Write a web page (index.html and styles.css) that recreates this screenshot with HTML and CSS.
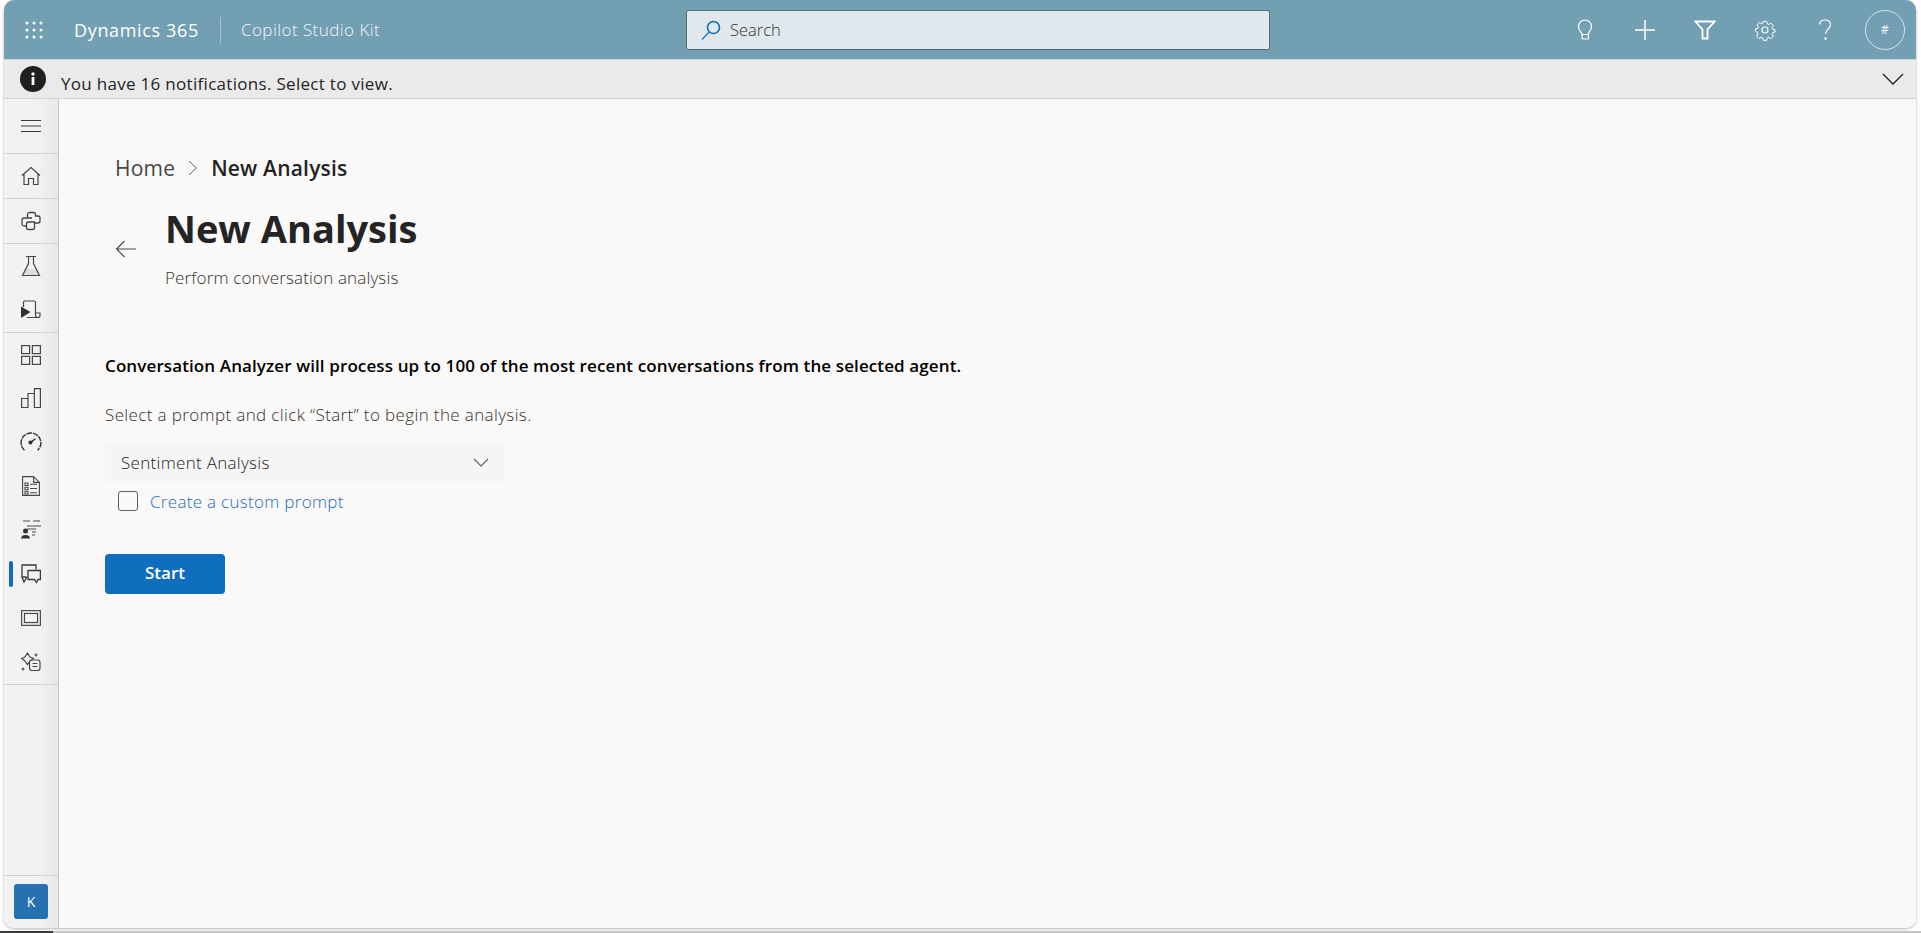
FILE: index.html
```html
<!DOCTYPE html>
<html lang="en">

<head>
    <meta charset="UTF-8">
    <meta name="viewport" content="width=device-width, initial-scale=1.0">
    <title>New Analysis</title>
    <link rel="stylesheet" href="styles.css">
</head>

<body>
    <div class="window">
        <header class="topbar">
            <div class="topbar-left">
                <svg class="waffle" width="20" height="20" viewBox="0 0 20 20" fill="#fff">
                    <circle cx="3" cy="3" r="1.5"/><circle cx="10" cy="3" r="1.5"/><circle cx="17" cy="3" r="1.5"/>
                    <circle cx="3" cy="10" r="1.5"/><circle cx="10" cy="10" r="1.5"/><circle cx="17" cy="10" r="1.5"/>
                    <circle cx="3" cy="17" r="1.5"/><circle cx="10" cy="17" r="1.5"/><circle cx="17" cy="17" r="1.5"/>
                </svg>
                <span class="brand">Dynamics 365</span>
                <span class="app-name">Copilot Studio Kit</span>
            </div>
            <div class="search">
                <svg width="24" height="24" viewBox="0 0 24 24" fill="none" stroke="#0f6cbd">
                    <circle cx="14.5" cy="9.5" r="6" stroke-width="1.6"/>
                    <path d="M10.2 14 3 21.5" stroke-width="1.1"/>
                </svg>
                <span>Search</span>
            </div>
            <div class="topbar-right">
                <button class="top-icon">
                    <svg width="20" height="22" viewBox="0 0 20 22" fill="none" stroke="#fff" stroke-width="1.2">
                        <path d="M7 15.5C6.5 12.5 3.5 11.5 3.5 7.5a6.5 6.5 0 0 1 13 0c0 4-3 5-3.500 8Z"/>
                        <path d="M7 15.500h6.500v3.500a1 1 0 0 1-1 1h-4.500a1 1 0 0 1-1-1Z"/>
                    </svg>
                </button>
                <button class="top-icon">
                    <svg width="22" height="22" viewBox="0 0 22 22" stroke="#fff" stroke-width="1.5"><path d="M11 1v20M1 11h20"/></svg>
                </button>
                <button class="top-icon">
                    <svg width="22" height="20" viewBox="0 0 22 20" fill="none" stroke="#fff" stroke-width="1.800"><path d="M1.500 1.500h19l-7 8v9h-5v-9Z"/></svg>
                </button>
                <button class="top-icon">
                    <svg width="22" height="22" viewBox="0 0 22 22" fill="none" stroke="#fff" stroke-width="1.100">
                        <circle cx="11" cy="11" r="3"/>
                        <path d="M9 1.500h4l.6 2.700 1.600.7 2.400-1.500 2.700 2.800-1.500 2.400.7 1.600 2.700.6v2.400l-2.700.6-.7 1.600 1.500 2.400-2.700 2.800-2.400-1.500-1.600.7-.6 2.700H9l-.6-2.700-1.600-.7-2.400 1.500-2.700-2.800 1.500-2.400-.7-1.600L.3 12.200V9.800l2.700-.6.7-1.600-1.500-2.400 2.700-2.800 2.400 1.500 1.600-.7Z" transform="translate(1.100 1.100) scale(.9)"/>
                    </svg>
                </button>
                <button class="top-icon">
                    <svg width="14" height="22" viewBox="0 0 14 22" fill="none" stroke="#fff" stroke-width="1.200">
                        <path d="M1.500 5.500C1.500 3 3.700 1 7 1s5.500 2 5.500 4.800c0 4-5 4.500-5 9.200"/>
                        <circle cx="7.500" cy="19.500" r=".6"/>
                    </svg>
                </button>
                <div class="avatar">#</div>
            </div>
        </header>

        <div class="notice">
            <svg width="26" height="26" viewBox="0 0 26 26">
                <circle cx="13" cy="13" r="13" fill="#201f1e"/>
                <circle cx="13" cy="8" r="1.700" fill="#fff"/>
                <rect x="11.600" y="11" width="2.800" height="8" fill="#fff"/>
            </svg>
            <span class="notice-text">You have 16 notifications. Select to view.</span>
            <svg class="notice-chevron" width="22" height="12" viewBox="0 0 22 12" fill="none" stroke="#201f1e" stroke-width="1.300"><path d="M1 1l10 10L21 1"/></svg>
        </div>

        <div class="body">
            <nav class="sidebar">
                <div class="nav-group nav-menu">
                    <svg class="nav-icon" width="22" height="14" viewBox="0 0 22 14" stroke="#3b3a39" stroke-width="1"><path d="M1 1.500h20M1 7h20M1 12.500h20"/></svg>
                </div>
                <div class="nav-group">
                    <div class="nav-item">
                        <svg width="20" height="20" viewBox="0 0 20 20" fill="none" stroke="#484644" stroke-width="1.200"><path d="M1 9.500 10 1.500l9 8M3 8v10.500h4.500v-6h5v6H17V8"/></svg>
                    </div>
                </div>
                <div class="nav-group">
                    <div class="nav-item">
                        <svg width="20" height="20" viewBox="0 0 20 20" fill="none" stroke="#484644" stroke-width="1.300"><path d="M6.500 7V3.500a2 2 0 0 1 2-2h4a2 2 0 0 1 2 2V5H17a2 2 0 0 1 2 2v3a2 2 0 0 1-2 2h-3.500v4.500a2 2 0 0 1-2 2h-4a2 2 0 0 1-2-2V15H3a2 2 0 0 1-2-2V9a2 2 0 0 1 2-2h8M5.500 15v-2a2 2 0 0 1 2-2h6.500"/></svg>
                    </div>
                </div>
                <div class="nav-group">
                    <div class="nav-item">
                        <svg width="20" height="22" viewBox="0 0 20 22" fill="none" stroke="#484644" stroke-width="1.200"><path d="M4.500 14h11l2.500 6.500H2Z" fill="#dcdcdc" stroke="none"/><path d="M5 1.500h10M7.500 1.500v7L1.500 20.500h17l-6-12v-7"/></svg>
                    </div>
                    <div class="nav-item">
                        <svg width="20" height="20" viewBox="0 0 20 20" fill="none" stroke="#484644" stroke-width="1.200"><path d="M2.500 7V2a1.500 1.500 0 0 1 1.500-1h9a1.500 1.500 0 0 1 1.500 1.500V15a2.500 2.500 0 0 0 2.500 2.500H6"/><path d="M14.500 13H19v2.500a2 2 0 0 1-2 2"/><path d="M0 6.500 9.500 12 0 18Z" fill="#323130" stroke="none"/></svg>
                    </div>
                </div>
                <div class="nav-group">
                    <div class="nav-item">
                        <svg width="20" height="20" viewBox="0 0 20 20" fill="none" stroke="#484644" stroke-width="1.200"><rect x=".6" y=".6" width="8" height="8"/><rect x="11.400" y=".6" width="8" height="8"/><rect x=".6" y="11.400" width="8" height="8"/><rect x="11.400" y="11.400" width="8" height="8"/></svg>
                    </div>
                    <div class="nav-item">
                        <svg width="20" height="20" viewBox="0 0 20 20" fill="none" stroke="#484644" stroke-width="1.200"><path d="M.6 10.500h6.400v9H.6ZM7 19.500V5.500h6.400v14M13.400 19.500V.6h6v18.900Z"/></svg>
                    </div>
                    <div class="nav-item">
                        <svg width="22" height="22" viewBox="0 0 20 20" fill="none" stroke="#323130" stroke-width="1.300"><path d="M4 17.500A9 9 0 1 1 16 17.500" stroke-dasharray="5 .8"/><path d="M9 11l5-4"/><circle cx="9.500" cy="10.500" r="1.200" fill="#323130"/></svg>
                    </div>
                    <div class="nav-item">
                        <svg width="18" height="20" viewBox="0 0 18 20" fill="none" stroke="#484644" stroke-width="1.100"><path d="M.6 .6h11l5.800 5.800v13H.6ZM11.600 .6v5.800h5.800"/><path d="M3 7h3v2.500H3ZM3 11.300h3v2.500H3ZM3 15.500h3V18H3ZM8 8.300h7M8 12.500h7M8 16.700h7"/></svg>
                    </div>
                    <div class="nav-item">
                        <svg width="20" height="20" viewBox="0 0 20 20" fill="none" stroke="#484644" stroke-width="1.100"><path d="M2 1h7M12 1h7M6 6h14M6 9h9M11 12h4M11 15h3"/><circle cx="4.500" cy="11" r="2.500" fill="#323130" stroke="none"/><path d="M0 18.500c0-2.500 2-3.500 4.500-3.500S9 16 9 18.500Z" fill="#323130" stroke="none"/></svg>
                    </div>
                    <div class="nav-item nav-item-active">
                        <svg width="20" height="20" viewBox="0 0 20 20" fill="none" stroke="#3b3a39" stroke-width="1.300"><path d="M5.500 13H1V1h14v4.500"/><path d="M1 13l2 5 3-5"/><path d="M7 6.500h12.400v9H17l-1.500 3-2-3H7Z" fill="#f1f1f1"/></svg>
                    </div>
                    <div class="nav-item">
                        <svg width="20" height="16" viewBox="0 0 20 16" fill="none" stroke="#484644" stroke-width="1.100"><rect x=".6" y=".6" width="18.800" height="14.800" fill="#e6e6e6"/><rect x="3.500" y="3.500" width="13" height="9" fill="#f3f3f3"/></svg>
                    </div>
                    <div class="nav-item">
                        <svg width="20" height="20" viewBox="0 0 20 20" fill="none" stroke="#484644" stroke-width="1.200"><path d="M6.500 1 9 5l3.500 1.500L9 9l-2.500 3.500L4 9 .6 6.500 4 5Z"/><rect x="8.500" y="8" width="10.500" height="10.500" rx="2.500" fill="#f1f1f1"/><path d="M11.500 11.500h5M11.500 14.500h5M15 1.500v3M13.500 3h3M2 15.500v3M.5 17h3"/></svg>
                    </div>
                </div>
                <div class="sidebar-foot">
                    <div class="env-badge">K</div>
                </div>
            </nav>

            <main class="main">
                <div class="breadcrumb">
                    <span class="crumb">Home</span>
                    <svg width="10" height="16" viewBox="0 0 10 16" fill="none" stroke="#605e5c"><path d="M1 1l7.500 7L1 15"/></svg>
                    <span class="crumb-current">New Analysis</span>
                </div>
                <div class="page-head">
                    <svg class="back" width="22" height="18" viewBox="0 0 22 18" fill="none" stroke="#484644" stroke-width="1.100"><path d="M21 9H1.500M9.500 1 1.500 9l8 8"/></svg>
                    <div>
                        <h1>New Analysis</h1>
                        <p class="subtitle">Perform conversation analysis</p>
                    </div>
                </div>
                <section class="form">
                    <p class="lead">Conversation Analyzer will process up to 100 of the most recent conversations from the selected agent.</p>
                    <p class="hint">Select a prompt and click “Start” to begin the analysis.</p>
                    <div class="select">
                        <span>Sentiment Analysis</span>
                        <svg width="16" height="9" viewBox="0 0 16 9" fill="none" stroke="#605e5c" stroke-width="1.100"><path d="M1 1l7 7 7-7"/></svg>
                    </div>
                    <div class="check-row">
                        <span class="checkbox"></span>
                        <a href="#" class="link">Create a custom prompt</a>
                    </div>
                    <button class="start">Start</button>
                </section>
            </main>
        </div>
    </div>
    <div class="under-strip"><div class="under-strip-dark"></div></div>
</body>

</html>
```

FILE: styles.css
```css
* {
    box-sizing: border-box;
}

html,
body {
    height: 100%;
}

body {
    margin: 0;
    font-family: "Open Sans", "Noto Sans", sans-serif;
    background-color: #fff;
    color: #242424;
    overflow: hidden;
    padding: 0 5px 0 4px;
}

button {
    font-family: inherit;
    border: none;
    background: none;
    padding: 0;
}

.window {
    height: 928px;
    display: flex;
    flex-direction: column;
    border-radius: 10px;
    overflow: hidden;
    box-shadow: 0 1px 3px rgba(0, 0, 0, 0.3);
}

.under-strip {
    height: 2px;
    margin: 3px -5px 0 -4px;
    background-color: #c4c4c4;
}

.under-strip-dark {
    width: 53px;
    height: 2px;
    background-color: #3a3a3a;
}

.topbar {
    height: 60px;
    flex: none;
    background-color: #729fb1;
    border-bottom: 1px solid #cfd3d6;
    display: grid;
    grid-template-columns: 662px 584px 1fr;
    align-items: center;
    color: #fff;
    padding: 0 11px 0 20px;
}

.topbar-left {
    display: flex;
    align-items: center;
}

.waffle {
    margin-right: 30px;
}

.brand {
    font-size: 18px;
    font-weight: 500;
    letter-spacing: 0.65px;
    padding-right: 21px;
    border-right: 1px solid #a5c3cf;
    line-height: 26px;
}

.app-name {
    font-size: 17px;
    font-weight: 300;
    letter-spacing: 0.45px;
    padding-left: 20px;
    color: #f3f7f9;
}

.search {
    height: 40px;
    background-color: #e0e8ee;
    border: 1px solid #5d6a72;
    border-radius: 2px;
    display: flex;
    align-items: center;
    gap: 7px;
    padding: 0 0 0 12px;
    font-size: 16.500px;
    font-weight: 300;
    color: #323130;
}

.topbar-right {
    display: flex;
    align-items: center;
    justify-content: flex-end;
}

.top-icon {
    width: 60px;
    height: 40px;
    display: flex;
    align-items: center;
    justify-content: center;
}

.avatar {
    width: 40px;
    height: 40px;
    margin-left: 10px;
    border: 1px solid #d7e4ea;
    border-radius: 50%;
    display: flex;
    align-items: center;
    justify-content: center;
    font-size: 12px;
}

.notice {
    height: 39px;
    flex: none;
    background-color: #eaeaea;
    border-bottom: 1px solid #d2d2d2;
    display: flex;
    align-items: center;
    padding: 0 12px 0 16px;
}

.notice-text {
    margin-left: 15px;
    margin-top: 8px;
    font-size: 17px;
    font-weight: 500;
    letter-spacing: 0.3px;
}

.notice-chevron {
    margin-left: auto;
}

.body {
    flex: 1;
    display: flex;
    min-height: 0;
}

.sidebar {
    width: 55px;
    flex: none;
    display: flex;
    flex-direction: column;
    background: linear-gradient(90deg, #f2f2f2 60%, #e8e8e8 100%);
    border-right: 1px solid #c8c8c8;
}

.nav-group {
    border-bottom: 1px solid #d2d2d2;
    padding: 0;
}

.nav-menu {
    height: 55px;
    display: flex;
    align-items: center;
    justify-content: center;
}

.nav-item {
    height: 43.9px;
    display: flex;
    align-items: center;
    justify-content: center;
    position: relative;
}

.nav-item-active::before {
    content: "";
    position: absolute;
    left: 5px;
    top: 9px;
    width: 4px;
    height: 26px;
    border-radius: 2px;
    background-color: #0f6cbd;
}

.sidebar-foot {
    margin-top: auto;
    height: 53px;
    border-top: 1px solid #d2d2d2;
    padding: 8px 0 0 10px;
}

.env-badge {
    width: 34px;
    height: 35px;
    border-radius: 3px;
    background-color: #2672b0;
    color: #fff;
    font-size: 14px;
    display: flex;
    align-items: center;
    justify-content: center;
}

.main {
    flex: 1;
    background-color: #faf9f8;
    padding: 0 0 0 46px;
}

.breadcrumb {
    display: flex;
    align-items: center;
    gap: 13px;
    margin: 54px 0 0 10px;
    height: 30px;
    font-size: 21px;
    letter-spacing: 0.2px;
}

.crumb {
    color: #484644;
}

.crumb-current {
    font-weight: 600;
}

.page-head {
    display: flex;
    align-items: center;
    margin: 18px 0 0 10px;
}

.back {
    margin: 8px 28px 0 0;
}

h1 {
    margin: 0;
    font-size: 38px;
    font-weight: 700;
    line-height: 54px;
}

.subtitle {
    margin: 12px 0 0;
    font-size: 17px;
    line-height: 22px;
    font-weight: 300;
    letter-spacing: 0.15px;
    color: #323130;
}

.form {
    margin-top: 65px;
}

.lead {
    margin: 0;
    font-size: 17px;
    font-weight: 600;
    letter-spacing: 0.11px;
    color: #000;
    line-height: 24px;
}

.hint {
    margin: 25px 0 0;
    font-size: 17px;
    font-weight: 300;
    letter-spacing: 0.37px;
    line-height: 24px;
    color: #323130;
}

.select {
    width: 400px;
    height: 40px;
    margin-top: 15px;
    padding: 0 16px;
    background-color: #f5f5f5;
    border-radius: 3px;
    display: flex;
    align-items: center;
    justify-content: space-between;
    font-size: 17px;
    font-weight: 300;
    letter-spacing: 0.3px;
}

.check-row {
    display: flex;
    align-items: center;
    gap: 12px;
    margin: 9px 0 0 13px;
    height: 20px;
}

.checkbox {
    width: 20px;
    height: 20px;
    border: 1px solid #605e5c;
    border-radius: 3px;
}

.link {
    color: #1a6dbd;
    text-decoration: none;
    font-size: 17px;
    font-weight: 300;
    letter-spacing: 0.3px;
}

.start {
    display: block;
    width: 120px;
    height: 40px;
    margin-top: 43px;
    border-radius: 4px;
    background-color: #106ebe;
    color: #fff;
    font-size: 17px;
    font-weight: 600;
    padding-bottom: 4px;
}
```
